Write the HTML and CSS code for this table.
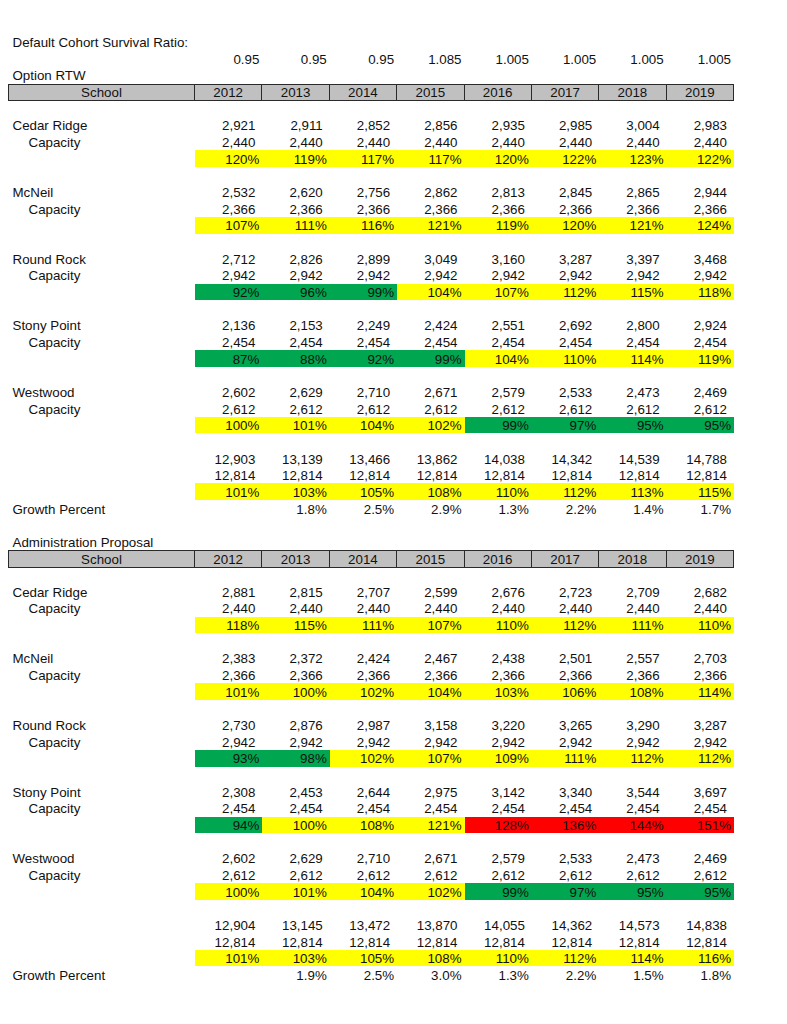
FILE: index.html
```html
<!DOCTYPE html>
<html lang="en">
<head>
<meta charset="utf-8">
<title>Cohort Survival Projections</title>
<link rel="stylesheet" href="styles.css">
</head>
<body>
<div class="sheet">
  <div class="row"><div class="title">Default Cohort Survival Ratio:</div></div>
  <div class="row"><div></div><div class="r">0.95</div><div class="r">0.95</div><div class="r">0.95</div><div class="r">1.085</div><div class="r">1.005</div><div class="r">1.005</div><div class="r">1.005</div><div class="r">1.005</div></div>
  <div class="row"><div class="title">Option RTW</div></div>
  <div class="row head"><div>School</div><div>2012</div><div>2013</div><div>2014</div><div>2015</div><div>2016</div><div>2017</div><div>2018</div><div>2019</div></div>
  <div class="row"></div>

  <div class="row"><div class="name">Cedar Ridge</div><div class="n">2,921</div><div class="n">2,911</div><div class="n">2,852</div><div class="n">2,856</div><div class="n">2,935</div><div class="n">2,985</div><div class="n">3,004</div><div class="n">2,983</div></div>
  <div class="row"><div class="cap">Capacity</div><div class="n">2,440</div><div class="n">2,440</div><div class="n">2,440</div><div class="n">2,440</div><div class="n">2,440</div><div class="n">2,440</div><div class="n">2,440</div><div class="n">2,440</div></div>
  <div class="row"><div></div><div class="p y">120%</div><div class="p y">119%</div><div class="p y">117%</div><div class="p y">117%</div><div class="p y">120%</div><div class="p y">122%</div><div class="p y">123%</div><div class="p y">122%</div></div>
  <div class="row"></div>

  <div class="row"><div class="name">McNeil</div><div class="n">2,532</div><div class="n">2,620</div><div class="n">2,756</div><div class="n">2,862</div><div class="n">2,813</div><div class="n">2,845</div><div class="n">2,865</div><div class="n">2,944</div></div>
  <div class="row"><div class="cap">Capacity</div><div class="n">2,366</div><div class="n">2,366</div><div class="n">2,366</div><div class="n">2,366</div><div class="n">2,366</div><div class="n">2,366</div><div class="n">2,366</div><div class="n">2,366</div></div>
  <div class="row"><div></div><div class="p y">107%</div><div class="p y">111%</div><div class="p y">116%</div><div class="p y">121%</div><div class="p y">119%</div><div class="p y">120%</div><div class="p y">121%</div><div class="p y">124%</div></div>
  <div class="row"></div>

  <div class="row"><div class="name">Round Rock</div><div class="n">2,712</div><div class="n">2,826</div><div class="n">2,899</div><div class="n">3,049</div><div class="n">3,160</div><div class="n">3,287</div><div class="n">3,397</div><div class="n">3,468</div></div>
  <div class="row"><div class="cap">Capacity</div><div class="n">2,942</div><div class="n">2,942</div><div class="n">2,942</div><div class="n">2,942</div><div class="n">2,942</div><div class="n">2,942</div><div class="n">2,942</div><div class="n">2,942</div></div>
  <div class="row"><div></div><div class="p g">92%</div><div class="p g">96%</div><div class="p g">99%</div><div class="p y">104%</div><div class="p y">107%</div><div class="p y">112%</div><div class="p y">115%</div><div class="p y">118%</div></div>
  <div class="row"></div>

  <div class="row"><div class="name">Stony Point</div><div class="n">2,136</div><div class="n">2,153</div><div class="n">2,249</div><div class="n">2,424</div><div class="n">2,551</div><div class="n">2,692</div><div class="n">2,800</div><div class="n">2,924</div></div>
  <div class="row"><div class="cap">Capacity</div><div class="n">2,454</div><div class="n">2,454</div><div class="n">2,454</div><div class="n">2,454</div><div class="n">2,454</div><div class="n">2,454</div><div class="n">2,454</div><div class="n">2,454</div></div>
  <div class="row"><div></div><div class="p g">87%</div><div class="p g">88%</div><div class="p g">92%</div><div class="p g">99%</div><div class="p y">104%</div><div class="p y">110%</div><div class="p y">114%</div><div class="p y">119%</div></div>
  <div class="row"></div>

  <div class="row"><div class="name">Westwood</div><div class="n">2,602</div><div class="n">2,629</div><div class="n">2,710</div><div class="n">2,671</div><div class="n">2,579</div><div class="n">2,533</div><div class="n">2,473</div><div class="n">2,469</div></div>
  <div class="row"><div class="cap">Capacity</div><div class="n">2,612</div><div class="n">2,612</div><div class="n">2,612</div><div class="n">2,612</div><div class="n">2,612</div><div class="n">2,612</div><div class="n">2,612</div><div class="n">2,612</div></div>
  <div class="row"><div></div><div class="p y">100%</div><div class="p y">101%</div><div class="p y">104%</div><div class="p y">102%</div><div class="p g">99%</div><div class="p g">97%</div><div class="p g">95%</div><div class="p g">95%</div></div>
  <div class="row"></div>

  <div class="row"><div></div><div class="n">12,903</div><div class="n">13,139</div><div class="n">13,466</div><div class="n">13,862</div><div class="n">14,038</div><div class="n">14,342</div><div class="n">14,539</div><div class="n">14,788</div></div>
  <div class="row"><div></div><div class="n">12,814</div><div class="n">12,814</div><div class="n">12,814</div><div class="n">12,814</div><div class="n">12,814</div><div class="n">12,814</div><div class="n">12,814</div><div class="n">12,814</div></div>
  <div class="row"><div></div><div class="p y">101%</div><div class="p y">103%</div><div class="p y">105%</div><div class="p y">108%</div><div class="p y">110%</div><div class="p y">112%</div><div class="p y">113%</div><div class="p y">115%</div></div>
  <div class="row"><div class="name">Growth Percent</div><div></div><div class="r">1.8%</div><div class="r">2.5%</div><div class="r">2.9%</div><div class="r">1.3%</div><div class="r">2.2%</div><div class="r">1.4%</div><div class="r">1.7%</div></div>
  <div class="row"></div>

  <div class="row"><div class="title">Administration Proposal</div></div>
  <div class="row head"><div>School</div><div>2012</div><div>2013</div><div>2014</div><div>2015</div><div>2016</div><div>2017</div><div>2018</div><div>2019</div></div>
  <div class="row"></div>

  <div class="row"><div class="name">Cedar Ridge</div><div class="n">2,881</div><div class="n">2,815</div><div class="n">2,707</div><div class="n">2,599</div><div class="n">2,676</div><div class="n">2,723</div><div class="n">2,709</div><div class="n">2,682</div></div>
  <div class="row"><div class="cap">Capacity</div><div class="n">2,440</div><div class="n">2,440</div><div class="n">2,440</div><div class="n">2,440</div><div class="n">2,440</div><div class="n">2,440</div><div class="n">2,440</div><div class="n">2,440</div></div>
  <div class="row"><div></div><div class="p y">118%</div><div class="p y">115%</div><div class="p y">111%</div><div class="p y">107%</div><div class="p y">110%</div><div class="p y">112%</div><div class="p y">111%</div><div class="p y">110%</div></div>
  <div class="row"></div>

  <div class="row"><div class="name">McNeil</div><div class="n">2,383</div><div class="n">2,372</div><div class="n">2,424</div><div class="n">2,467</div><div class="n">2,438</div><div class="n">2,501</div><div class="n">2,557</div><div class="n">2,703</div></div>
  <div class="row"><div class="cap">Capacity</div><div class="n">2,366</div><div class="n">2,366</div><div class="n">2,366</div><div class="n">2,366</div><div class="n">2,366</div><div class="n">2,366</div><div class="n">2,366</div><div class="n">2,366</div></div>
  <div class="row"><div></div><div class="p y">101%</div><div class="p y">100%</div><div class="p y">102%</div><div class="p y">104%</div><div class="p y">103%</div><div class="p y">106%</div><div class="p y">108%</div><div class="p y">114%</div></div>
  <div class="row"></div>

  <div class="row"><div class="name">Round Rock</div><div class="n">2,730</div><div class="n">2,876</div><div class="n">2,987</div><div class="n">3,158</div><div class="n">3,220</div><div class="n">3,265</div><div class="n">3,290</div><div class="n">3,287</div></div>
  <div class="row"><div class="cap">Capacity</div><div class="n">2,942</div><div class="n">2,942</div><div class="n">2,942</div><div class="n">2,942</div><div class="n">2,942</div><div class="n">2,942</div><div class="n">2,942</div><div class="n">2,942</div></div>
  <div class="row"><div></div><div class="p g">93%</div><div class="p g">98%</div><div class="p y">102%</div><div class="p y">107%</div><div class="p y">109%</div><div class="p y">111%</div><div class="p y">112%</div><div class="p y">112%</div></div>
  <div class="row"></div>

  <div class="row"><div class="name">Stony Point</div><div class="n">2,308</div><div class="n">2,453</div><div class="n">2,644</div><div class="n">2,975</div><div class="n">3,142</div><div class="n">3,340</div><div class="n">3,544</div><div class="n">3,697</div></div>
  <div class="row"><div class="cap">Capacity</div><div class="n">2,454</div><div class="n">2,454</div><div class="n">2,454</div><div class="n">2,454</div><div class="n">2,454</div><div class="n">2,454</div><div class="n">2,454</div><div class="n">2,454</div></div>
  <div class="row"><div></div><div class="p g">94%</div><div class="p y">100%</div><div class="p y">108%</div><div class="p y">121%</div><div class="p red">128%</div><div class="p red">136%</div><div class="p red">144%</div><div class="p red">151%</div></div>
  <div class="row"></div>

  <div class="row"><div class="name">Westwood</div><div class="n">2,602</div><div class="n">2,629</div><div class="n">2,710</div><div class="n">2,671</div><div class="n">2,579</div><div class="n">2,533</div><div class="n">2,473</div><div class="n">2,469</div></div>
  <div class="row"><div class="cap">Capacity</div><div class="n">2,612</div><div class="n">2,612</div><div class="n">2,612</div><div class="n">2,612</div><div class="n">2,612</div><div class="n">2,612</div><div class="n">2,612</div><div class="n">2,612</div></div>
  <div class="row"><div></div><div class="p y">100%</div><div class="p y">101%</div><div class="p y">104%</div><div class="p y">102%</div><div class="p g">99%</div><div class="p g">97%</div><div class="p g">95%</div><div class="p g">95%</div></div>
  <div class="row"></div>

  <div class="row"><div></div><div class="n">12,904</div><div class="n">13,145</div><div class="n">13,472</div><div class="n">13,870</div><div class="n">14,055</div><div class="n">14,362</div><div class="n">14,573</div><div class="n">14,838</div></div>
  <div class="row"><div></div><div class="n">12,814</div><div class="n">12,814</div><div class="n">12,814</div><div class="n">12,814</div><div class="n">12,814</div><div class="n">12,814</div><div class="n">12,814</div><div class="n">12,814</div></div>
  <div class="row"><div></div><div class="p y">101%</div><div class="p y">103%</div><div class="p y">105%</div><div class="p y">108%</div><div class="p y">110%</div><div class="p y">112%</div><div class="p y">114%</div><div class="p y">116%</div></div>
  <div class="row"><div class="name">Growth Percent</div><div></div><div class="r">1.9%</div><div class="r">2.5%</div><div class="r">3.0%</div><div class="r">1.3%</div><div class="r">2.2%</div><div class="r">1.5%</div><div class="r">1.8%</div></div>
</div>
</body>
</html>
```

FILE: styles.css
```css
html, body {
  margin: 0;
  padding: 0;
  background: #ffffff;
}

body {
  font-family: "Liberation Sans", Arial, sans-serif;
  font-size: 13.33px;
  color: #111111;
}

.sheet {
  padding: 33.67px 0 0 8px;
  width: 726px;
}

.row {
  display: grid;
  grid-template-columns: 187px repeat(8, 67.375px);
  grid-template-rows: 16.667px;
  height: 16.667px;
  line-height: 16.667px;
}

.row > div {
  white-space: nowrap;
  overflow: visible;
  padding-top: 1.5px;
}

.title {
  grid-column: 1 / -1;
  padding-left: 4.5px;
}

.name {
  padding-left: 4.5px;
}

.cap {
  padding-left: 20.5px;
}

.n {
  text-align: right;
  padding-right: 7px;
}

.r {
  text-align: right;
  padding-right: 3px;
}

.p {
  text-align: right;
  padding-right: 3px;
}

.y { background: #ffff00; }
.g { background: #00a650; }
.red { background: #ff0000; }

.head {
  height: 17.667px;
  grid-template-rows: 17.667px;
  margin-bottom: -1px;
}

.head > div {
  background: #c0c0c0;
  border: 1px solid #2a2a2a;
  border-left: 0;
  box-sizing: border-box;
  text-align: center;
  line-height: 15px;
  padding-top: 0.5px;
}

.head > div:first-child {
  border-left: 1px solid #2a2a2a;
}
```
